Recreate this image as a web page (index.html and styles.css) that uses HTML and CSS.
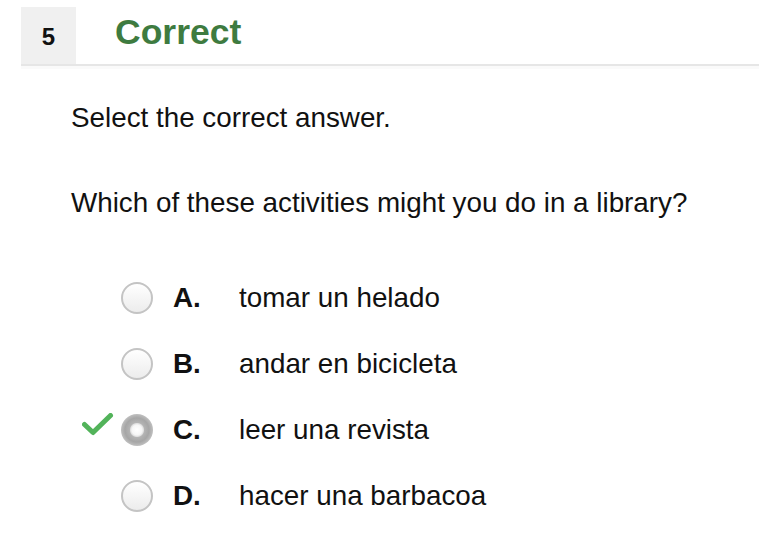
FILE: index.html
```html
<!DOCTYPE html>
<html>
<head>
<meta charset="utf-8">
<link rel="stylesheet" href="styles.css">
</head>
<body>
<div class="header">
  <div class="num">5</div>
  <div class="title">Correct</div>
</div>
<div class="content">
  <p class="prompt">Select the correct answer.</p>
  <p class="question">Which of these activities might you do in a library?</p>
  <div class="options">
    <div class="option">
      <div class="mark"></div>
      <div class="radio"></div>
      <div class="letter">A.</div>
      <div class="text">tomar un helado</div>
    </div>
    <div class="option">
      <div class="mark"></div>
      <div class="radio"></div>
      <div class="letter">B.</div>
      <div class="text">andar en bicicleta</div>
    </div>
    <div class="option">
      <div class="mark">
        <svg width="32" height="26" viewBox="0 0 32 26"><path d="M2.5 11.5 L11 19.5 L28.5 2.5" fill="none" stroke="#52b35a" stroke-width="5" stroke-linecap="round" stroke-linejoin="round"/></svg>
      </div>
      <div class="radio selected"></div>
      <div class="letter">C.</div>
      <div class="text">leer una revista</div>
    </div>
    <div class="option">
      <div class="mark"></div>
      <div class="radio"></div>
      <div class="letter">D.</div>
      <div class="text">hacer una barbacoa</div>
    </div>
  </div>
</div>
</body>
</html>
```

FILE: styles.css
```css
html, body {
  margin: 0;
  padding: 0;
  background: #ffffff;
  font-family: "Liberation Sans", Arial, Helvetica, sans-serif;
  color: #111111;
}

.header {
  display: flex;
  align-items: stretch;
  margin-top: 7px;
  margin-left: 21px;
  height: 57px;
  border-bottom: 2px solid #e6e6e6;
  box-shadow: 0 3px 0 #fafafa;
}

.num {
  width: 55px;
  background: #f0f0f0;
  display: flex;
  align-items: center;
  justify-content: center;
  font-weight: bold;
  font-size: 24px;
  color: #111;
  padding-top: 2px;
  box-sizing: border-box;
}

.title {
  display: flex;
  align-items: center;
  padding-left: 39px;
  font-weight: bold;
  font-size: 35.5px;
  color: #3e7b40;
  padding-bottom: 6px;
}

.content {
  padding-left: 71px;
}

.prompt, .question {
  margin: 0;
  font-size: 27.8px;
  line-height: 32px;
}

.prompt {
  margin-top: 36px;
}

.question {
  margin-top: 53px;
}

.options {
  margin-top: 46px;
  display: flex;
  flex-direction: column;
}

.option {
  display: flex;
  align-items: center;
  height: 66px;
}

.mark {
  width: 50px;
  height: 32px;
  display: flex;
  align-items: flex-start;
  padding-left: 11px;
  box-sizing: border-box;
}

.mark svg {
  margin-top: -1px;
}

.radio {
  width: 32px;
  height: 32px;
  box-sizing: border-box;
  border-radius: 50%;
  border: 2px solid #c4c4c4;
  background: linear-gradient(#ffffff, #ececec);
  flex: none;
}

.radio.selected {
  border: none;
  background: radial-gradient(circle at 50% 50%, #ffffff 0, #f6f6f6 5px, #e0e0e0 6.5px, #b4b4b4 7.5px, #a6a6a6 12px, #c0c0c0 16px);
}

.letter {
  margin-left: 20px;
  width: 66px;
  font-weight: bold;
  font-size: 27.8px;
}

.text {
  font-size: 27.8px;
}
```
